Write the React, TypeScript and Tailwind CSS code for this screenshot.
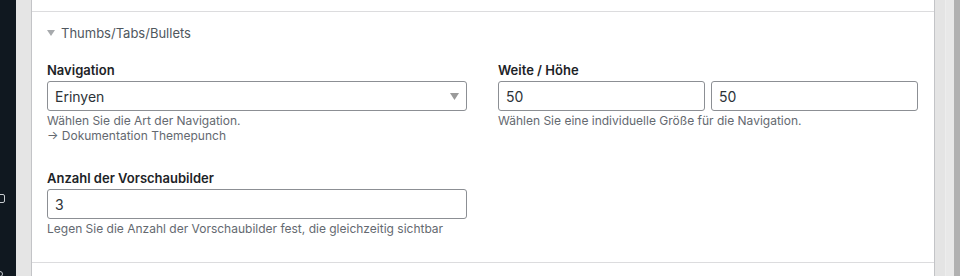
const font = { fontFamily: "Inter, 'Noto Sans', sans-serif" };

function Label({ children }: { children: React.ReactNode }) {
  return (
    <div className="mb-[3px] text-[13px] font-semibold leading-4 text-[#1d2327]">
      {children}
    </div>
  );
}

function Help({ children }: { children: React.ReactNode }) {
  return <div className="mt-[2px] text-[12px] leading-[15px] text-[#646970]">{children}</div>;
}

function TextBox({ value, className = "" }: { value: string; className?: string }) {
  return (
    <div
      className={`flex h-[30px] items-center rounded-[3px] border border-[#8c8f94] bg-white px-[7px] text-[14px] text-[#2c3338] ${className}`}
    >
      {value}
    </div>
  );
}

export default function App() {
  return (
    <div className="flex h-[276px] w-[960px] overflow-hidden bg-white" style={font}>
      {/* admin sidebar edge */}
      <div className="relative w-[16px] flex-none bg-[#101820]">
        <div className="absolute left-[-4px] top-[194px] h-[9px] w-[9px] rounded-[2px] border border-[#c8ccd0]" />
        <div className="absolute left-[-3px] top-[271px] h-[6px] w-[6px] rounded-full border border-[#c8ccd0]" />
      </div>
      <div className="w-[16px] flex-none border-r border-[#c3c4c7] bg-[#e5e5e5]" />

      {/* settings panel */}
      <div className="flex w-[903px] flex-none flex-col border-r border-[#c3c4c7] bg-white">
        <div className="h-[12px] flex-none border-b border-[#dcdcde]" />
        <div className="border-b border-[#dcdcde] pl-[15px] pr-[15px] pb-[26px]">
          <div className="flex items-center gap-[6px] pt-[13px] text-[13px] leading-4 text-[#50575e]">
            <svg width="8" height="6" viewBox="0 0 8 6" className="fill-[#a7aaad]">
              <path d="M0 0h8L4 6z" />
            </svg>
            <span>Thumbs/Tabs/Bullets</span>
          </div>

          <div className="mt-[21px] grid grid-cols-[420px_420px] gap-x-[31px] gap-y-[27px]">
            <div>
              <Label>Navigation</Label>
              <div className="flex h-[30px] items-center justify-between rounded-[3px] border border-[#8c8f94] bg-white pl-[7px] pr-[7px] text-[14px] text-[#2c3338]">
                <span>Erinyen</span>
                <svg width="9" height="7" viewBox="0 0 9 7" className="fill-[#9a9a9a]">
                  <path d="M0 0h9L4.5 7z" />
                </svg>
              </div>
              <Help>
                <div>Wählen Sie die Art der Navigation.</div>
                <div>→ Dokumentation Themepunch</div>
              </Help>
            </div>

            <div>
              <Label>Weite / Höhe</Label>
              <div className="flex gap-[6px]">
                <TextBox value="50" className="flex-1" />
                <TextBox value="50" className="flex-1" />
              </div>
              <Help>Wählen Sie eine individuelle Größe für die Navigation.</Help>
            </div>

            <div>
              <Label>Anzahl der Vorschaubilder</Label>
              <TextBox value="3" />
              <Help>Legen Sie die Anzahl der Vorschaubilder fest, die gleichzeitig sichtbar</Help>
            </div>
          </div>
        </div>
      </div>

      {/* right scroll gutter */}
      <div className="flex flex-1">
        <div className="w-[11px] border-r border-[#ededed] bg-[#e4e4e4]" />
        <div className="w-[8px] bg-[#e8e8e8]" />
        <div className="flex-1 bg-[#b1b1b1]" />
      </div>
    </div>
  );
}
